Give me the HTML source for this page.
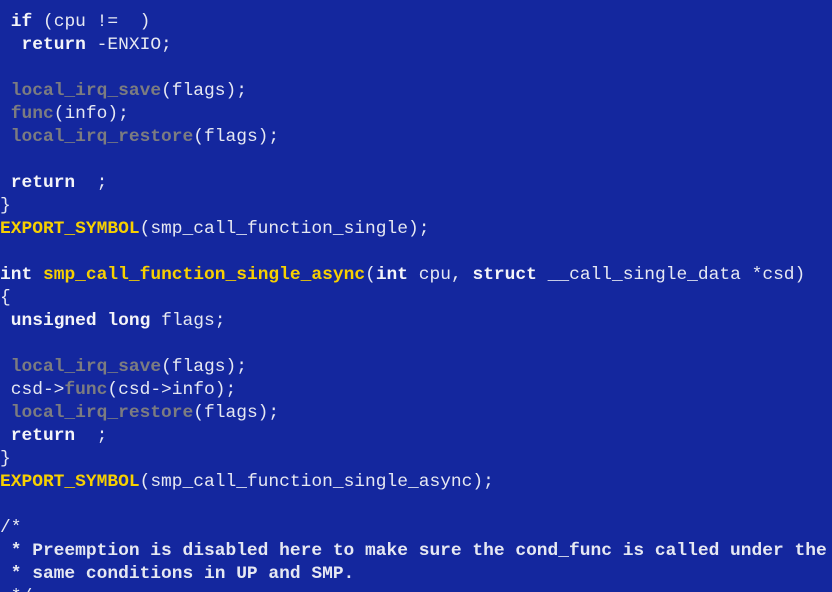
<!DOCTYPE html>
<html><head><meta charset="utf-8"><style>
html,body{margin:0;padding:0;background:#14279e;width:832px;height:592px;overflow:hidden}
pre{margin:0;padding:11px 0 0 0;font-family:"Liberation Mono",monospace;font-size:17.9px;line-height:23px;color:#e6e8f2;white-space:pre}
b{font-weight:bold;color:#f4f4f8}
.g{color:#7c7c80;font-weight:bold}
.y{color:#f7d000;font-weight:bold}
.c{color:#e6e8f2;font-weight:bold}
</style></head><body><pre> <b>if</b> (cpu !=  )
  <b>return</b> -ENXIO;

 <span class="g">local_irq_save</span>(flags);
 <span class="g">func</span>(info);
 <span class="g">local_irq_restore</span>(flags);

 <b>return</b>  ;
}
<span class="y">EXPORT_SYMBOL</span>(smp_call_function_single);

<b>int</b> <span class="y">smp_call_function_single_async</span>(<b>int</b> cpu, <b>struct</b> __call_single_data *csd)
{
 <b>unsigned</b> <b>long</b> flags;

 <span class="g">local_irq_save</span>(flags);
 csd-&gt;<span class="g">func</span>(csd-&gt;info);
 <span class="g">local_irq_restore</span>(flags);
 <b>return</b>  ;
}
<span class="y">EXPORT_SYMBOL</span>(smp_call_function_single_async);

/*
<span class="c"> * Preemption is disabled here to make sure the cond_func is called under the</span>
<span class="c"> * same conditions in UP and SMP.</span>
 */
</pre></body></html>
